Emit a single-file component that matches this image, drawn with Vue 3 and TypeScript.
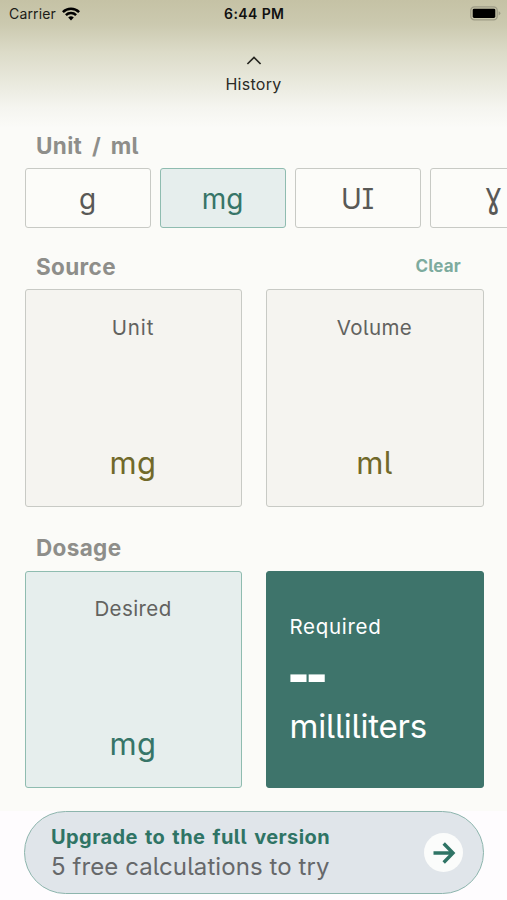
<script setup lang="ts">
import { ref } from 'vue'

interface Unit {
  id: string
  label: string
}

const units: Unit[] = [
  { id: 'g', label: 'g' },
  { id: 'mg', label: 'mg' },
  { id: 'ui', label: 'UI' },
  { id: 'gamma', label: 'ɣ' },
]
const selected = ref('mg')
</script>

<template>
  <div class="screen">
    <header class="top">
      <div class="status">
        <div class="carrier">
          <span>Carrier</span>
          <svg width="18" height="14" viewBox="0 0 18 14" fill="none" stroke="#000" stroke-width="2.5">
            <path d="M.9 5.1a11.5 11.5 0 0 1 16.2 0" />
            <path d="M3.9 8.2a7.2 7.2 0 0 1 10.2 0" />
            <path d="M9 13.4 6.2 10.5a4 4 0 0 1 5.6 0z" fill="#000" stroke="none" />
          </svg>
        </div>
        <span class="time">6:44 PM</span>
        <svg class="battery" width="31" height="15" viewBox="0 0 31 15">
          <rect x=".8" y=".8" width="26.4" height="13" rx="3.6" fill="none" stroke="#9d9b86" stroke-width="1.3" />
          <rect x="2.7" y="2.7" width="22.6" height="9.2" rx="1.4" fill="#000" />
          <path d="M28.6 5.2q1.8.6 1.8 2.1t-1.8 2.1z" fill="#9d9b86" />
        </svg>
      </div>
      <div class="history">
        <svg width="16" height="11" viewBox="0 0 16 11" fill="none" stroke="#25251f" stroke-width="1.7">
          <path d="M1.4 9 8 2.4 14.6 9" />
        </svg>
        <span>History</span>
      </div>
    </header>

    <h2 class="heading">Unit / ml</h2>
    <div class="units">
      <button
        v-for="u in units"
        :key="u.id"
        class="unit"
        :class="{ active: selected === u.id, gamma: u.id === 'gamma' }"
        @click="selected = u.id"
      ><span>{{ u.label }}</span></button>
    </div>

    <div class="heading-row">
      <h2 class="heading">Source</h2>
      <span class="clear">Clear</span>
    </div>
    <div class="cards">
      <div class="card">
        <span class="label wide">Unit</span>
        <span class="value">mg</span>
      </div>
      <div class="card">
        <span class="label">Volume</span>
        <span class="value">ml</span>
      </div>
    </div>

    <h2 class="heading dosage">Dosage</h2>
    <div class="cards">
      <div class="card desired">
        <span class="label">Desired</span>
        <span class="value">mg</span>
      </div>
      <div class="card required">
        <span class="label">Required</span>
        <span class="result">--</span>
        <span class="full-unit">milliliters</span>
      </div>
    </div>

    <footer class="foot">
      <div class="banner">
        <div class="copy">
          <span class="upgrade">Upgrade to the full version</span>
          <span class="free">5 free calculations to try</span>
        </div>
        <div class="go">
          <svg width="24" height="22" viewBox="0 0 24 22" fill="none" stroke="#2f7465" stroke-width="3.4">
            <path d="M1.5 11H21M11.7 1.5 21 11l-9.3 9.5" />
          </svg>
        </div>
      </div>
    </footer>
  </div>
</template>

<style>
body {
  background: #fbfbf8;
}
</style>

<style scoped>
.screen {
  width: 507px;
  height: 900px;
  overflow: hidden;
  box-sizing: border-box;
  display: flex;
  flex-direction: column;
  background: #fbfbf8;
  font-family: Inter, 'Noto Sans', sans-serif;
  font-feature-settings: 'cv05' 1, 'cv08' 1;
  color: #62625f;
}
.top {
  height: 128px;
  flex: none;
  background: linear-gradient(#c5c2a5 0, #cbc9af 24px, #dcdbc8 52px, #e9e9dd 82px, #f5f5f0 108px, #fbfbf8 128px);
}
.status {
  height: 27px;
  padding: 0 6px 0 9px;
  display: grid;
  grid-template-columns: 1fr auto 1fr;
  align-items: center;
  font-size: 14px;
  color: #1c1c17;
  font-feature-settings: normal;
}
.carrier {
  display: flex;
  align-items: center;
  gap: 6px;
  letter-spacing: 0.15px;
}
.time {
  font-weight: 600;
  letter-spacing: 0.4px;
  margin-right: 1.5px;
  color: #111;
}
.battery {
  justify-self: end;
}
.history {
  padding-top: 28px;
  display: flex;
  flex-direction: column;
  align-items: center;
  gap: 8px;
  font-size: 16px;
  line-height: 20px;
  letter-spacing: 0.3px;
  color: #2b2b26;
}
.heading {
  margin: 0;
  padding: 4px 0 8px 36px;
  font-size: 22.5px;
  font-weight: 700;
  line-height: 28px;
  letter-spacing: 0.35px;
  word-spacing: 4px;
  color: #8e8e8a;
}
.units {
  display: flex;
  gap: 9px;
  padding-left: 25px;
}
.unit {
  flex: none;
  box-sizing: border-box;
  width: 126px;
  height: 60px;
  padding: 2px 1px 0 0;
  border: 1px solid #c8cac5;
  border-radius: 3px;
  background: #fcfcf9;
  font: inherit;
  font-feature-settings: inherit;
  font-size: 28px;
  color: #595956;
}
.unit.gamma {
  font-family: 'DejaVu Sans', sans-serif;
  font-size: 35px;
  line-height: 40px;
  padding: 0 0 5px;
}
.unit.gamma span {
  display: inline-block;
  transform: scaleX(0.85);
}
.unit.active {
  border-color: #8fbcb0;
  background: #e6eeed;
  color: #377568;
}
.heading-row {
  display: flex;
  justify-content: space-between;
  padding-top: 21px;
}
.clear {
  padding: 6px 46px 0 0;
  font-size: 17px;
  font-weight: 700;
  line-height: 22px;
  letter-spacing: 0.2px;
  color: #7dab9e;
}
.cards {
  display: flex;
  gap: 24px;
  padding-left: 25px;
}
.card {
  box-sizing: border-box;
  width: 217px;
  height: 218px;
  padding: 24px 1px 25px 0;
  border: 1px solid #c8cac5;
  border-radius: 3px;
  background: #f5f4f0;
  display: flex;
  flex-direction: column;
  justify-content: space-between;
  align-items: center;
}
.card + .card {
  width: 218px;
}
.label {
  font-size: 20.5px;
  line-height: 28px;
  letter-spacing: 0.4px;
}
.label.wide {
  letter-spacing: 0.9px;
}
.value {
  font-size: 31px;
  line-height: 36px;
  letter-spacing: 0.5px;
  color: #71692a;
}
.heading.dosage {
  padding-top: 27px;
  padding-bottom: 9px;
}
.desired,
.card.required {
  height: 217px;
}
.desired {
  padding-top: 23px;
  border-color: #8fbcb0;
  background: #e6eeed;
}
.desired .value {
  color: #377568;
}
.card.required {
  align-items: flex-start;
  justify-content: flex-start;
  padding: 41px 0 0 22.5px;
  border-color: #3e746b;
  background: #3e746b;
  color: #fff;
}
.required .label {
  letter-spacing: 0.7px;
}
.result {
  font-family: 'Liberation Sans', sans-serif;
  font-weight: 700;
  font-size: 63px;
  line-height: 64px;
  letter-spacing: -2.7px;
  margin-left: -1.5px;
}
.full-unit {
  font-size: 33px;
  line-height: 42px;
  letter-spacing: -0.2px;
}
.foot {
  flex: 1;
  margin-top: 23px;
  padding: 0 23px 0 24px;
  background: #fefcfe;
}
.banner {
  box-sizing: border-box;
  height: 83px;
  padding: 0 20px 0 26px;
  border: 1px solid #8db5ad;
  border-radius: 42px;
  background: #e0e5ea;
  display: flex;
  align-items: center;
  justify-content: space-between;
}
.copy {
  display: flex;
  flex-direction: column;
  white-space: nowrap;
}
.upgrade {
  margin-top: -1px;
  font-size: 20px;
  font-weight: 700;
  line-height: 30px;
  letter-spacing: 0.42px;
  word-spacing: 2px;
  color: #2f7465;
}
.free {
  font-size: 24px;
  line-height: 30px;
  letter-spacing: 0.08px;
  color: #66686a;
}
.go {
  flex: none;
  width: 39px;
  height: 39px;
  border-radius: 50%;
  background: #fbfcfb;
  display: flex;
  align-items: center;
  justify-content: center;
}
</style>
